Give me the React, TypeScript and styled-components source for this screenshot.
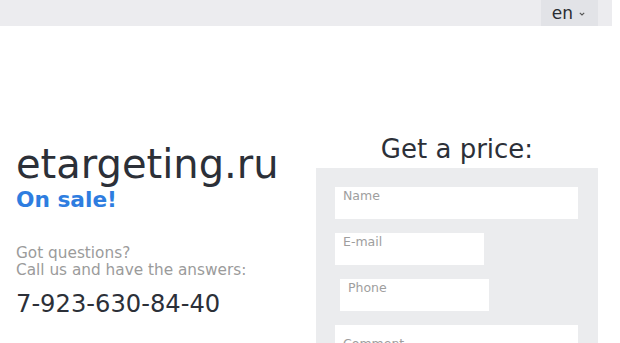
import React from 'react';
import styled, { createGlobalStyle } from 'styled-components';

const GlobalStyle = createGlobalStyle`
  body {
    margin: 0;
    background: #ffffff;
    font-family: "DejaVu Sans", Verdana, sans-serif;
    color: #2c3038;
  }
`;

const fields = [
  { name: 'name', label: 'Name', width: 243, shift: 0 },
  { name: 'email', label: 'E-mail', width: 149, shift: 0 },
  { name: 'phone', label: 'Phone', width: 149, shift: 5 },
  { name: 'comment', label: 'Comment', width: 243, shift: 0, tall: true },
];

const App: React.FC = () => {
  return (
    <>
      <GlobalStyle />
      <TopBar>
        <LangButton type="button">
          en
          <svg width="6" height="4" viewBox="0 0 6 4">
            <path d="M0.8 0.8 L3 3 L5.2 0.8" fill="none" stroke="#555" strokeWidth="1.1" />
          </svg>
        </LangButton>
      </TopBar>
      <Main>
        <Info>
          <Domain>etargeting.ru</Domain>
          <SaleTag>On sale!</SaleTag>
          <Questions>
            Got questions?
            <br />
            Call us and have the answers:
          </Questions>
          <Phone>7-923-630-84-40</Phone>
        </Info>
        <PriceColumn>
          <PriceTitle>Get a price:</PriceTitle>
          <Form>
            {fields.map((f) => (
              <Field
                key={f.name}
                name={f.name}
                placeholder={f.label}
                rows={1}
                $width={f.width}
                $shift={f.shift}
                $tall={f.tall}
              />
            ))}
          </Form>
        </PriceColumn>
      </Main>
    </>
  );
};

const TopBar = styled.header`
  width: 612px;
  height: 26px;
  background: #ececef;
  display: flex;
  justify-content: flex-end;
  padding-right: 14px;
  box-sizing: border-box;
`;

const LangButton = styled.button`
  display: flex;
  align-items: center;
  gap: 6px;
  height: 26px;
  padding: 0 13px 0 11px;
  border: none;
  background: #e2e3e7;
  font-family: "DejaVu Sans", sans-serif;
  font-size: 17px;
  color: #2a2d33;
  cursor: pointer;

  svg {
    margin-top: 2px;
  }
`;

const Main = styled.main`
  display: flex;
  padding-left: 16px;
`;

const Info = styled.section`
  width: 300px;
  padding-top: 115px;
`;

const Domain = styled.h1`
  margin: 0;
  font-size: 40px;
  line-height: 46px;
  font-weight: normal;
  color: #2c3038;
`;

const SaleTag = styled.div`
  font-size: 21.7px;
  line-height: 26px;
  font-weight: bold;
  color: #2e7de0;
`;

const Questions = styled.p`
  margin: 32px 0 0;
  font-size: 15.3px;
  line-height: 17px;
  color: #9b9b9b;
`;

const Phone = styled.div`
  margin-top: 11px;
  font-size: 24.2px;
  line-height: 28px;
  color: #2c3038;
`;

const PriceColumn = styled.section`
  width: 282px;
  padding-top: 108px;
`;

const PriceTitle = styled.h2`
  margin: 0 0 4px;
  font-size: 26px;
  line-height: 30px;
  font-weight: normal;
  text-align: center;
  color: #2c3038;
`;

const Form = styled.form`
  display: flex;
  flex-direction: column;
  gap: 14px;
  padding: 19px;
  background: #ebecee;
  min-height: 260px;
`;

const Field = styled.textarea<{ $width: number; $shift: number; $tall?: boolean }>`
  display: block;
  box-sizing: border-box;
  width: ${(p) => p.$width}px;
  height: ${(p) => (p.$tall ? 80 : 32)}px;
  margin-left: ${(p) => p.$shift}px;
  padding: ${(p) => (p.$tall ? '11px 8px' : '1px 8px')};
  border: none;
  outline: none;
  resize: none;
  background: #ffffff;
  font-family: "DejaVu Sans", sans-serif;
  font-size: 12.5px;
  line-height: 15px;
  color: #333;

  &::placeholder {
    color: #9e9e9e;
  }
`;

export default App;
